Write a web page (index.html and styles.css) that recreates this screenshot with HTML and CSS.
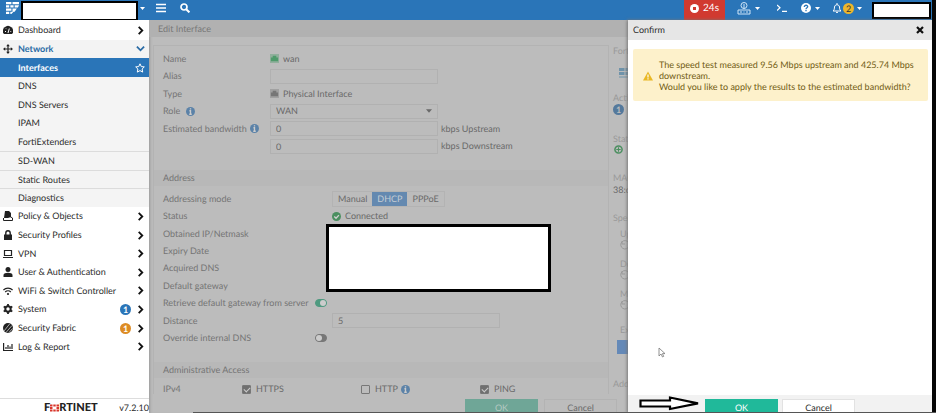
FILE: index.html
```
<!DOCTYPE html>
<html lang="en">
<head>
  <meta charset="UTF-8">
  <title>Edit Interface</title>
  <link rel="stylesheet" href="styles.css">
</head>
<body>

  <!-- Shared icons -->
  <svg class="sprite" aria-hidden="true">
    <symbol id="chevron" viewBox="0 0 10 10"><path d="M3 1l4 4-4 4" fill="none" stroke="currentColor" stroke-width="2"/></symbol>
    <symbol id="caret" viewBox="0 0 10 10"><path d="M0 2h10L5 8z" fill="currentColor"/></symbol>
    <symbol id="info" viewBox="0 0 10 10"><circle cx="5" cy="5" r="5" fill="currentColor"/><path d="M5 1.3v1.6M3.8 4.2H5v3.6M3.6 8h2.8" stroke="#ccc" stroke-width="1.5" fill="none"/></symbol>
    <symbol id="port" viewBox="0 0 10 10"><path d="M0 0h10v10H0z" fill="currentColor" opacity=".4"/><path d="M1 8V4h2V2h4v2h2v4z" fill="currentColor"/></symbol>
    <symbol id="spin" viewBox="0 0 10 10"><path d="M8.5 2.5A4.2 4.2 0 1 0 9 6M2 1v3h3" fill="none" stroke="currentColor"/></symbol>
  </svg>

  <header class="topbar">
    <svg class="logo" viewBox="0 0 12 11"><path d="M0 0h5v2H0zM6 0h6v2H6zM0 3h3v2H0zM4 3h3v2H4zM8 3h4L11 5H8zM0 6h5v2H0zM6 6h4L8 9H6zM0 9h3v2H0zM4 9h3l-2 2H4z" fill="#fff"/></svg>
    <span class="masked masked-host"></span>
    <svg class="caret"><use href="#caret"/></svg>
    <button class="top-btn menu" aria-label="Menu"><svg viewBox="0 0 10 10"><path d="M0 1.5h10M0 5h10M0 8.5h10" stroke="#fff" stroke-width="1.5"/></svg></button>
    <button class="top-btn search" aria-label="Search"><svg viewBox="0 0 10 10"><circle cx="4" cy="4" r="3" fill="none" stroke="#fff" stroke-width="1.7"/><path d="M6.2 6.2l3.2 3.2" stroke="#fff" stroke-width="2"/></svg></button>

    <div class="top-right">
      <button class="recording"><svg viewBox="0 0 10 10"><circle cx="5" cy="5" r="5" fill="#fff"/><path d="M3.3 3.3h3.4v3.4H3.3z" fill="#d13a30"/></svg>24s</button>
      <button class="top-btn device" aria-label="Device">
        <svg class="wide" viewBox="0 0 14 13"><g fill="none" stroke="#cfe6f8"><circle cx="7" cy="3.5" r="3"/><path d="M7 2v4.5M1 8h12v4H1zM3 10h2M6.5 10h1M9 10h2"/></g></svg>
        <svg class="caret"><use href="#caret"/></svg>
      </button>
      <button class="top-btn cli" aria-label="CLI"><svg viewBox="0 0 10 10"><path d="M0 2l3 2.7L0 7.5M5 8.3h5" fill="none" stroke="#fff" stroke-width="1.2"/></svg></button>
      <button class="top-btn help" aria-label="Help">
        <svg viewBox="0 0 10 10"><circle cx="5" cy="5" r="5" fill="#fff"/><path d="M3.3 4c0-2.4 3.6-2.2 3.4-.2C6.6 4.9 5 4.7 5 6.2M5 7v1.3" fill="none" stroke="#2a75b8" stroke-width="1.3"/></svg>
        <svg class="caret"><use href="#caret"/></svg>
      </button>
      <button class="top-btn bell" aria-label="Notifications">
        <svg viewBox="0 0 10 10"><path d="M1 8c1.5-1 1.3-2.5 1.5-4C2.8 1 7.2 1 7.5 4c.2 1.5 0 3 1.5 4zM4 9.4h2M5 0v1.500" fill="none" stroke="#fff"/></svg>
        <span class="count">2</span>
        <svg class="caret"><use href="#caret"/></svg>
      </button>
      <span class="masked masked-user"></span>
    </div>
  </header>

  <div class="layout">
    <!-- Side menu -->
    <aside class="sidebar">
      <nav class="menu-list">
        <a href="#"><svg viewBox="0 0 10 10"><path d="M1 9a5 5 0 1 1 8 0z" fill="currentColor"/><path d="M5 8l1.3-4.5M2 6.5h1M3 3.5l.6.6M8.2 6.5h-.8" stroke="#fff"/></svg><span>Dashboard</span><svg class="arrow"><use href="#chevron"/></svg></a>
        <a href="#" class="open"><svg viewBox="0 0 10 10"><path d="M5 1v8M1 5h8" stroke="currentColor" stroke-width="1.2"/><path d="M5 0l1.8 2.2H3.2zM5 10l1.8-2.2H3.2zM0 5l2.2 1.8V3.2zM10 5L7.8 6.8V3.2z" fill="currentColor"/></svg><span>Network</span><svg class="arrow down"><use href="#chevron"/></svg></a>
        <a href="#" class="sub active"><span>Interfaces</span><svg class="star" viewBox="0 0 10 10"><path d="M5 .8l1.3 2.8 3 .3-2.2 2.1.6 3.1L5 7.6 2.3 9.1l.6-3.1L.7 3.9l3-.3z" fill="none" stroke="#fff"/></svg></a>
        <a href="#" class="sub"><span>DNS</span></a>
        <a href="#" class="sub"><span>DNS Servers</span></a>
        <a href="#" class="sub"><span>IPAM</span></a>
        <a href="#" class="sub"><span>FortiExtenders</span></a>
        <a href="#" class="sub split"><span>SD-WAN</span></a>
        <a href="#" class="sub split"><span>Static Routes</span></a>
        <a href="#" class="sub split"><span>Diagnostics</span></a>
        <a href="#"><svg viewBox="0 0 10 10"><path d="M2 0h4l2 2v4L5 7H1z" fill="currentColor"/><path d="M.5 7v2.5h9V7L7 5.5" fill="none" stroke="currentColor"/></svg><span>Policy &amp; Objects</span><svg class="arrow"><use href="#chevron"/></svg></a>
        <a href="#"><svg viewBox="0 0 10 10"><path d="M1 4.5h8V10H1z" fill="currentColor"/><path d="M2.8 5V3a2.2 2.2 0 0 1 4.4 0v2" fill="none" stroke="currentColor" stroke-width="1.4"/></svg><span>Security Profiles</span><svg class="arrow"><use href="#chevron"/></svg></a>
        <a href="#"><svg viewBox="0 0 10 10"><path d="M1.5 1.5h7v5h-7zM0 8.5h10" fill="none" stroke="currentColor" stroke-width="1.2"/></svg><span>VPN</span><svg class="arrow"><use href="#chevron"/></svg></a>
        <a href="#"><svg viewBox="0 0 10 10"><circle cx="5" cy="2.6" r="2.5" fill="currentColor"/><path d="M.5 10V8c0-3 9-3 9 0v2z" fill="currentColor"/></svg><span>User &amp; Authentication</span><svg class="arrow"><use href="#chevron"/></svg></a>
        <a href="#"><svg viewBox="0 0 10 10"><path d="M.4 4a6.6 6.6 0 0 1 9.2 0M2.2 6a4 4 0 0 1 5.6 0" fill="none" stroke="currentColor" stroke-width="1.2"/><circle cx="5" cy="8" r="1.1" fill="currentColor"/></svg><span>WiFi &amp; Switch Controller</span><svg class="arrow"><use href="#chevron"/></svg></a>
        <a href="#"><svg viewBox="0 0 10 10"><circle cx="5" cy="5" r="2.7" fill="none" stroke="currentColor" stroke-width="2"/><path d="M5 0v2M5 8v2M.7 2.5l1.7 1M7.6 6.5l1.7 1M.7 7.5l1.7-1M7.6 3.5l1.7-1" stroke="currentColor" stroke-width="1.8"/></svg><span>System</span><b class="badge">1</b><svg class="arrow"><use href="#chevron"/></svg></a>
        <a href="#"><svg viewBox="0 0 10 10"><circle cx="5" cy="5" r="5" fill="currentColor"/><path d="M1 8L7 .5M3 9.5l6-7M6 9.5l3.5-4" stroke="#bbb" stroke-width=".9"/></svg><span>Security Fabric</span><b class="badge orange">1</b><svg class="arrow"><use href="#chevron"/></svg></a>
        <a href="#"><svg viewBox="0 0 10 10"><path d="M.6 1v7.5H10M3 7V5M5 7V3M7 7V4.5M9 7V2" fill="none" stroke="currentColor" stroke-width="1.2"/></svg><span>Log &amp; Report</span><svg class="arrow"><use href="#chevron"/></svg></a>
      </nav>
      <div class="brand">
        <span class="brand-name">F<svg viewBox="0 0 9 7"><path d="M0 0h2.5v2H0zM3.3 0h2.4v2H3.3zM6.5 0H9v2H6.5zM0 2.6h2.5v1.8H0zM6.5 2.6H9v1.8H6.5zM0 5h2.5v2H0zM3.3 5h2.4v2H3.3zM6.5 5H9v2H6.5z" fill="#d8352b"/></svg>RTINET</span>
        <span class="version">v7.2.10</span>
      </div>
    </aside>

    <!-- Interface form -->
    <main class="page">
      <h1 class="page-title">Edit Interface</h1>
      <div class="columns">
        <form class="card">
          <div class="rows general">
            <div class="row"><span class="label">Name</span><span class="value"><svg class="port up"><use href="#port"/></svg>wan</span></div>
            <div class="row"><label class="label" for="alias">Alias</label><input type="text" id="alias"></div>
            <div class="row"><span class="label">Type</span><span class="value"><svg class="port"><use href="#port"/></svg>Physical Interface</span></div>
            <div class="row">
              <label class="label" for="role">Role <svg class="info role-info"><use href="#info"/></svg></label>
              <span class="select-box"><select id="role"><option>WAN</option></select><svg class="caret"><use href="#caret"/></svg></span>
            </div>
            <div class="row"><label class="label" for="up">Estimated bandwidth <svg class="info"><use href="#info"/></svg></label><input type="text" id="up" value="0"><span class="unit">kbps Upstream</span></div>
            <div class="row"><span class="label"></span><input type="text" id="down" value="0" aria-label="Downstream"><label class="unit" for="down">kbps Downstream</label></div>
          </div>

          <h2>Address</h2>
          <div class="rows address">
            <div class="row"><span class="label">Addressing mode</span><span class="modes"><button type="button">Manual</button><button type="button" class="selected">DHCP</button><button type="button">PPPoE</button></span></div>
            <div class="row"><span class="label">Status</span><span class="value"><svg class="ok-icon" viewBox="0 0 10 10"><circle cx="5" cy="5" r="5" fill="currentColor"/><path d="M2.5 5l2 2 3.2-3.5" fill="none" stroke="#d0d0d0" stroke-width="1.5"/></svg>Connected</span></div>
            <div class="row"><span class="label">Obtained IP/Netmask</span></div>
            <div class="row"><span class="label">Expiry Date</span></div>
            <div class="row"><span class="label">Acquired DNS</span></div>
            <div class="row"><span class="label">Default gateway</span></div>
            <div class="row toggle"><label class="label" for="retrieve">Retrieve default gateway from server</label><input type="checkbox" id="retrieve" checked></div>
            <div class="row"><label class="label" for="distance">Distance</label><input type="text" id="distance" value="5"></div>
            <div class="row toggle"><label class="label" for="override">Override internal DNS</label><input type="checkbox" id="override"></div>
            <div class="masked masked-address"></div>
          </div>

          <h2>Administrative Access</h2>
          <div class="access">
            <span class="label">IPv4</span>
            <label><input type="checkbox" checked>HTTPS</label>
            <label><input type="checkbox">HTTP<svg class="info"><use href="#info"/></svg></label>
            <label><input type="checkbox" checked>PING</label>
          </div>
        </form>

        <section class="details">
          <p>FortiGate</p>
          <svg class="device-icon" viewBox="0 0 12 10"><path d="M0 0h12v7H0zM0 8.5h12v1H0z" fill="currentColor"/><path d="M0 3.5h12M6 0v7" stroke="#bcbcbc"/></svg>
          <p>Actions</p>
          <b class="badge muted">1</b>
          <p class="after-badge">Status</p>
          <svg class="plus" viewBox="0 0 10 10"><circle cx="5" cy="5" r="4" fill="none" stroke="currentColor" stroke-width="1.7"/><path d="M5 2.5v5M2.5 5h5" stroke="currentColor" stroke-width="1.2"/></svg>
          <p class="mac">MAC address</p>
          <p class="strong">38:c0</p>
          <p class="speed">Speed Test</p>
          <div class="tests">
            <p>Upload</p><svg><use href="#spin"/></svg>
            <p>Download</p><svg><use href="#spin"/></svg>
            <p>Measured</p><svg><use href="#spin"/></svg>
            <p class="execute">Execute</p>
          </div>
          <button type="button" class="run" aria-label="Execute speed test"></button>
          <p>Additional</p>
        </section>
      </div>
      <div class="actions">
        <button class="btn primary">OK</button>
        <button class="btn">Cancel</button>
      </div>
    </main>
  </div>

  <!-- Confirmation panel -->
  <section class="dialog" role="dialog" aria-labelledby="dialog-title">
    <div class="dialog-head">
      <h2 id="dialog-title">Confirm</h2>
      <button aria-label="Close"><svg viewBox="0 0 10 10"><path d="M2 2l6 6M8 2L2 8" stroke="#111" stroke-width="2.2"/></svg></button>
    </div>
    <div class="dialog-body">
      <div class="alert">
        <svg viewBox="0 0 10 10"><path d="M5 .5L10 9.5H0z" fill="#e9b824"/><path d="M5 3.5v3M5 7.3v1.2" stroke="#fff" stroke-width="1.2"/></svg>
        <p>The speed test measured 9.56 Mbps upstream and 425.74 Mbps downstream.<br>Would you like to apply the results to the estimated bandwidth?</p>
      </div>
      <svg class="cursor" viewBox="0 0 8 11"><path d="M1 1v8l2-2 1.5 3 1.2-.6L4.4 6.6H7z" fill="#fff" stroke="#777" stroke-width=".8"/></svg>
    </div>
    <div class="dialog-foot">
      <svg class="pointer" viewBox="0 0 62 15"><path d="M1.5 4.5H31V1.5L59 7.3 31 13v-2.5H1.5z" fill="#fff" stroke="#000" stroke-width="2.2"/></svg>
      <button class="btn primary">OK</button>
      <button class="btn">Cancel</button>
    </div>
  </section>
  <div class="edge"></div>
  <div class="bottom-line"></div>

</body>
</html>
```
FILE: styles.css
```
* {
  box-sizing: border-box;
}
body {
  margin: 0;
  height: 100vh;
  display: flex;
  flex-direction: column;
  overflow: hidden;
  position: relative;
  font-family: Lato, sans-serif;
  font-size: 9px;
  line-height: 12px;
  text-rendering: geometricPrecision;
  color: #2b2b2b;
  background-color: #bcbcbc;
}
h1, h2, p {
  margin: 0;
  font-size: 9px;
  font-weight: normal;
}
button, input, select {
  font: inherit;
  color: inherit;
  text-rendering: inherit;
  margin: 0;
  padding: 0;
  border: none;
  background: none;
}
svg {
  display: block;
  flex: none;
  width: 10px;
  height: 10px;
}
.sprite {
  position: absolute;
  width: 0;
  height: 0;
}
.caret {
  width: 5px;
  height: 5px;
}
.masked {
  background-color: #fff;
  border: 2px solid #000;
}

/* Top bar */
.topbar {
  flex: none;
  display: flex;
  align-items: center;
  height: 20px;
  padding-left: 6px;
  padding-bottom: 4px;
  color: #fff;
  background-color: #2a75b8;
}
.logo {
  width: 13px;
  height: 12px;
}
.masked-host {
  width: 117px;
  height: 20px;
  margin: 5px 2px 0 2px;
}
.top-btn {
  display: flex;
  align-items: center;
  gap: 4px;
}
.menu {
  margin-left: 11px;
}
.search {
  margin-left: 14px;
}
.top-right {
  display: flex;
  align-items: center;
  margin-left: auto;
  padding-right: 5px;
}
.recording {
  display: flex;
  align-items: center;
  justify-content: center;
  gap: 4px;
  width: 41px;
  height: 20px;
  margin: 4px 12px 0 0;
  padding-bottom: 4px;
  font-size: 10px;
  background-color: #d13a30;
}
.recording svg {
  width: 9px;
  height: 9px;
}
.wide {
  width: 14px;
  height: 13px;
}
.cli {
  margin-left: 17px;
}
.help {
  margin-left: 14px;
}
.bell {
  gap: 1px;
  margin-left: 12px;
}
.bell .caret {
  margin-left: 2px;
}
.count {
  width: 11px;
  height: 11px;
  border-radius: 6px;
  line-height: 11px;
  text-align: center;
  color: #333;
  background-color: #edb62c;
}
.masked-user {
  width: 59px;
  height: 17px;
  margin: 4px 0 0 10px;
}

/* Side menu */
.layout {
  flex: 1;
  display: flex;
  min-height: 0;
}
.sidebar {
  flex: none;
  display: flex;
  flex-direction: column;
  justify-content: space-between;
  width: 149px;
  background-color: #fff;
}
.menu-list {
  display: grid;
  grid-auto-rows: 1fr;
  height: 335px;
  margin-top: 1px;
}
.menu-list a {
  display: flex;
  align-items: center;
  gap: 5px;
  padding: 0 4px 0 3px;
  color: inherit;
  text-decoration: none;
}
.menu-list a > svg:first-child {
  color: #222;
}
.menu-list span {
  flex: 1;
}
.menu-list .arrow {
  width: 9px;
  height: 9px;
  color: #111;
}
.menu-list .down {
  transform: rotate(90deg);
}
.menu-list .open,
.menu-list .open svg {
  color: #2a6ba5;
  background-color: #f3f3f3;
}
.menu-list .open {
  font-weight: bold;
}
.menu-list .sub {
  padding-left: 18px;
  background-color: #f4f4f4;
}
.menu-list .split {
  border-top: 1px solid #dcdcdc;
}
.menu-list .active {
  color: #fff;
  font-weight: bold;
  background-color: #2a75b8;
}
.badge {
  width: 11px;
  height: 11px;
  border-radius: 6px;
  line-height: 11px;
  text-align: center;
  color: #fff;
  background-color: #2a75b8;
}
.orange {
  background-color: #dd8c25;
}
.brand {
  display: flex;
  height: 15px;
  padding: 3px 0 0 44px;
  border-top: 1px solid #ddd;
}
.brand-name {
  display: flex;
  align-items: center;
  width: 76px;
  font-size: 11px;
  font-weight: 900;
  color: #222;
}
.brand-name svg {
  width: 9px;
  height: 8px;
}

/* Form */
.page {
  flex: 1;
  display: flex;
  flex-direction: column;
  min-width: 0;
  color: #696969;
  background-color: #bcbcbc;
  box-shadow: inset 3px 0 3px -2px #999;
}
.page-title {
  flex: none;
  height: 17px;
  padding: 3px 9px;
  color: #777;
  background-color: #b1b1b1;
}
.columns {
  flex: 1;
  display: flex;
  min-height: 0;
  padding: 8px 0 0 4px;
  overflow: hidden;
}
.card {
  flex: none;
  width: 456px;
  padding-top: 4px;
  border: 1px solid #b3b3b3;
  border-bottom: none;
}
.rows {
  display: grid;
  grid-auto-rows: 1fr;
  padding-left: 9px;
  position: relative;
}
.general {
  height: 105px;
}
.address {
  height: 157px;
  margin-top: 4px;
}
.row {
  display: flex;
  align-items: center;
}
.label {
  display: flex;
  align-items: center;
  gap: 3px;
  flex: none;
  width: 107px;
  white-space: nowrap;
}
.label,
.card h2 {
  color: #747474;
}
.address .label {
  width: 169px;
}
.address .toggle .label {
  width: 152px;
}
.info {
  width: 9px;
  height: 9px;
  color: #5b82a8;
}
.role-info {
  margin-left: 3px;
}
.value {
  display: flex;
  align-items: center;
  gap: 4px;
}
.port {
  width: 9px;
  height: 9px;
  color: #777;
}
.port.up {
  color: #4f9a6b;
}
.row input[type="text"],
.select-box {
  width: 168px;
  height: 15px;
  padding: 0 5px;
  border: 1px solid #b1b1b1;
}
.select-box {
  display: flex;
  align-items: center;
}
.select-box select {
  flex: 1;
  appearance: none;
}
.select-box .caret {
  width: 6px;
  height: 6px;
}
.unit {
  margin-left: 3px;
}
.card h2 {
  height: 16px;
  margin-top: 15px;
  padding: 2px 9px;
  background-color: #b8b8b8;
}
.modes {
  display: flex;
  border: 1px solid #b3b3b3;
}
.modes button {
  height: 14px;
  padding: 0 5px;
}
.modes .selected {
  color: #c4cdd5;
  background-color: #6489b0;
}
.ok-icon,
.plus {
  width: 9px;
  height: 9px;
  color: #4b8f60;
}
.toggle input {
  display: flex;
  appearance: none;
  width: 12px;
  height: 8px;
  border: 1px solid #777;
  border-radius: 4px;
  background-color: #777;
}
.toggle input::before {
  content: "";
  width: 6px;
  height: 6px;
  border-radius: 3px;
  background-color: #ccc;
}
.toggle input:checked {
  justify-content: flex-end;
  border-color: #4f9a80;
  background-color: #4f9a80;
}
.masked-address {
  position: absolute;
  left: 172px;
  top: 34px;
  width: 225px;
  height: 68px;
  border-width: 3px;
}
.access {
  display: grid;
  grid-template-columns: 79px 119px 119px 119px;
  align-items: center;
  height: 16px;
  margin-top: 3px;
  padding-left: 9px;
}
.access label {
  display: flex;
  align-items: center;
  gap: 5px;
}
.access .info {
  margin-left: -2px;
}
.access input {
  appearance: none;
  width: 9px;
  height: 9px;
  border: 1px solid #777;
  border-radius: 1px;
}
.access input:checked {
  background-color: #707070;
}
.access input:checked::before {
  content: "";
  display: block;
  width: 5px;
  height: 3px;
  margin: 1px;
  border: solid #ccc;
  border-width: 0 0 1px 1px;
  transform: rotate(-45deg);
}

/* Details column behind the dialog */
.details {
  flex: 1;
  padding-left: 4px;
  color: #999;
  white-space: nowrap;
}
.device-icon {
  width: 12px;
  margin: 11px 0 14px 6px;
  color: #6f93aa;
}
.muted {
  display: block;
  background-color: #54799c;
  color: #bcbcbc;
}
.after-badge {
  margin-top: 18px;
}
.plus {
  margin-left: 1px;
}
.mac {
  margin-top: 18px;
}
.strong {
  color: #696969;
}
.speed {
  margin-top: 16px;
}
.tests {
  padding: 4px 0 0 7px;
}
.tests svg {
  margin-bottom: 8px;
}
.tests .execute {
  margin-top: 14px;
}
.run {
  display: block;
  width: 60px;
  height: 14px;
  margin: 4px 0 24px 4px;
  background-color: #6489b8;
}

/* Buttons */
.btn {
  width: 73px;
  height: 17px;
  background-color: #fff;
  border: 1px solid #e2e2e2;
}
.btn.primary {
  color: #fff;
  background-color: #20b99a;
  border-color: #20b99a;
}
.actions {
  flex: none;
  display: flex;
  gap: 6px;
  height: 19px;
  padding: 5px 0 0 316px;
}
.actions .btn {
  background-color: #bcbcbc;
  border-color: #b3b3b3;
}
.actions .btn.primary {
  color: #b5c9c2;
  background-color: #6fa697;
  border-color: #6fa697;
}

/* Dialog */
.dialog {
  position: absolute;
  top: 20px;
  right: 4px;
  bottom: 0;
  width: 304px;
  display: flex;
  flex-direction: column;
  background-color: #fff;
  box-shadow: -1px 0 3px #777;
}
.dialog-head {
  display: flex;
  align-items: center;
  justify-content: space-between;
  height: 20px;
  padding: 0 7px 0 5px;
  background-color: #e6e6e6;
}
.dialog-body {
  flex: 1;
  padding: 9px 4px 0 5px;
  position: relative;
}
.alert {
  display: flex;
  align-items: center;
  gap: 6px;
  padding: 10px 10px 9px 10px;
  border-radius: 2px;
  color: #705b12;
  background-color: #fdf1cb;
}
.alert p {
  line-height: 11px;
}
.cursor {
  position: absolute;
  left: 30px;
  bottom: 37px;
  width: 8px;
  height: 11px;
}
.dialog-foot {
  position: relative;
  display: flex;
  justify-content: center;
  gap: 4px;
  height: 18px;
  padding-top: 4px;
  background-color: #f2f2f2;
}
.pointer {
  position: absolute;
  left: 11px;
  top: 1px;
  width: 62px;
  height: 15px;
}

/* Black frame on the right and bottom */
.edge {
  position: absolute;
  top: 0;
  right: 0;
  bottom: 0;
  width: 4px;
  background-color: #060606;
}
.bottom-line {
  position: absolute;
  left: 193px;
  right: 0;
  bottom: 0;
  height: 1px;
  background-color: #555;
}
```
